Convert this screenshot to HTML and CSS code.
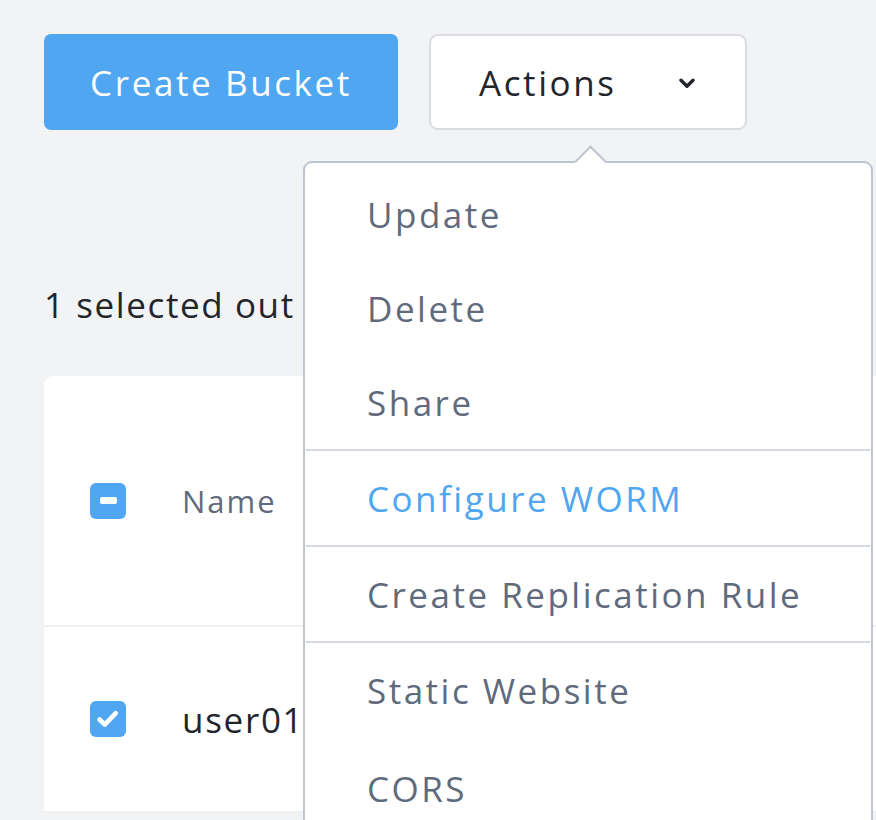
FILE: index.html
```html
<!DOCTYPE html>
<html lang="en">
<head>
<meta charset="utf-8">
<title>Buckets</title>
<link rel="stylesheet" href="styles.css">
</head>
<body>
<div class="page">
  <div class="toolbar">
    <button class="btn btn-primary">Create Bucket</button>
    <div class="dropdown">
      <button class="btn btn-actions">
        <span>Actions</span>
        <svg class="chevron" width="16" height="11" viewBox="0 0 16 11"><path d="M2 2.2 L8 8.2 L14 2.2" fill="none" stroke="#22252b" stroke-width="3.4" stroke-linecap="round" stroke-linejoin="round"/></svg>
      </button>
      <div class="menu">
        <span class="menu-arrow"></span>
        <div class="menu-group">
          <div class="menu-item">Update</div>
          <div class="menu-item">Delete</div>
          <div class="menu-item">Share</div>
        </div>
        <div class="menu-group">
          <div class="menu-item active">Configure WORM</div>
        </div>
        <div class="menu-group">
          <div class="menu-item">Create Replication Rule</div>
        </div>
        <div class="menu-group">
          <div class="menu-item">Static Website</div>
          <div class="menu-item">CORS</div>
        </div>
      </div>
    </div>
  </div>

  <div class="summary">1 selected out of 1</div>

  <div class="card">
    <div class="row row-head">
      <span class="checkbox"><span class="minus"></span></span>
      <span class="col-name head-label">Name</span>
    </div>
    <div class="row row-body">
      <span class="checkbox">
        <svg width="36" height="36" viewBox="0 0 36 36"><path d="M9.5 18.5 L14.8 23.6 L25.8 12.2" fill="none" stroke="#fff" stroke-width="4.6" stroke-linecap="round" stroke-linejoin="round"/></svg>
      </span>
      <span class="col-name cell-text">user01</span>
    </div>
  </div>
</div>
</body>
</html>
```

FILE: styles.css
```css
html, body {
  margin: 0;
  padding: 0;
  overflow: hidden;
  background: #f2f3f5;
}

body {
  font-family: "Open Sans", "Noto Sans", sans-serif;
  width: 876px;
  height: 820px;
}

.page {
  padding: 34px 0 0 44px;
}

.toolbar {
  display: flex;
  gap: 31px;
  align-items: flex-start;
}

.btn {
  font-family: inherit;
  font-size: 35px;
  letter-spacing: 2.6px;
  height: 96px;
  border-radius: 7px;
  cursor: pointer;
  box-sizing: border-box;
}

.btn-primary {
  width: 354px;
  background: #50a6f0;
  color: #ffffff;
  border: none;
  padding: 0;
}

.dropdown {
  position: relative;
}

.btn-actions {
  width: 318px;
  background: #ffffff;
  color: #22252b;
  border: 2px solid #dadde2;
  border-radius: 9px;
  display: flex;
  align-items: center;
  justify-content: space-between;
  padding: 0 50px 0 48px;
}

.chevron {
  display: block;
  margin-top: 2px;
}

.menu {
  position: absolute;
  left: -126px;
  top: 127px;
  width: 570px;
  height: 700px;
  box-sizing: border-box;
  background: #ffffff;
  border: 2px solid #bdc4cd;
  border-radius: 9px;
  padding-top: 4px;
  z-index: 10;
}

.menu-arrow {
  position: absolute;
  left: 274px;
  top: -13px;
  width: 21px;
  height: 21px;
  background: #ffffff;
  border-top: 2px solid #bdc4cd;
  border-left: 2px solid #bdc4cd;
  transform: rotate(45deg);
}

.menu-group + .menu-group {
  border-top: 2px solid #d6dae0;
  margin: 0 1px;
}

.menu-group + .menu-group .menu-item {
  margin-left: -1px;
}

.menu-item {
  height: 94px;
  display: flex;
  align-items: center;
  padding-left: 62px;
  font-size: 35px;
  letter-spacing: 2.5px;
  color: #5f6b7d;
}

.menu-group:last-child .menu-item:last-child {
  padding-top: 4px;
}

.menu-item.active {
  color: #50a6f0;
}

.summary {
  margin-top: 155px;
  font-size: 35px;
  letter-spacing: 1.6px;
  line-height: 40px;
  color: #22252b;
}

.card {
  margin-top: 51px;
  width: 1000px;
  background: #ffffff;
  border-radius: 9px 0 0 0;
}

.row {
  display: flex;
  align-items: center;
  padding-left: 46px;
  border-bottom: 2px solid #eff0f2;
}

.row-head {
  height: 249px;
}

.row-body {
  height: 184px;
}

.checkbox {
  width: 36px;
  height: 36px;
  border-radius: 6px;
  background: #50a6f0;
  display: flex;
  align-items: center;
  justify-content: center;
  flex-shrink: 0;
}

.minus {
  width: 17px;
  height: 7px;
  border-radius: 2px;
  background: #ffffff;
}

.col-name {
  margin-left: 56px;
}

.head-label {
  font-size: 31px;
  letter-spacing: 2px;
  color: #5f6b7d;
}

.cell-text {
  font-size: 35px;
  letter-spacing: 1.7px;
  color: #22252b;
}
```
